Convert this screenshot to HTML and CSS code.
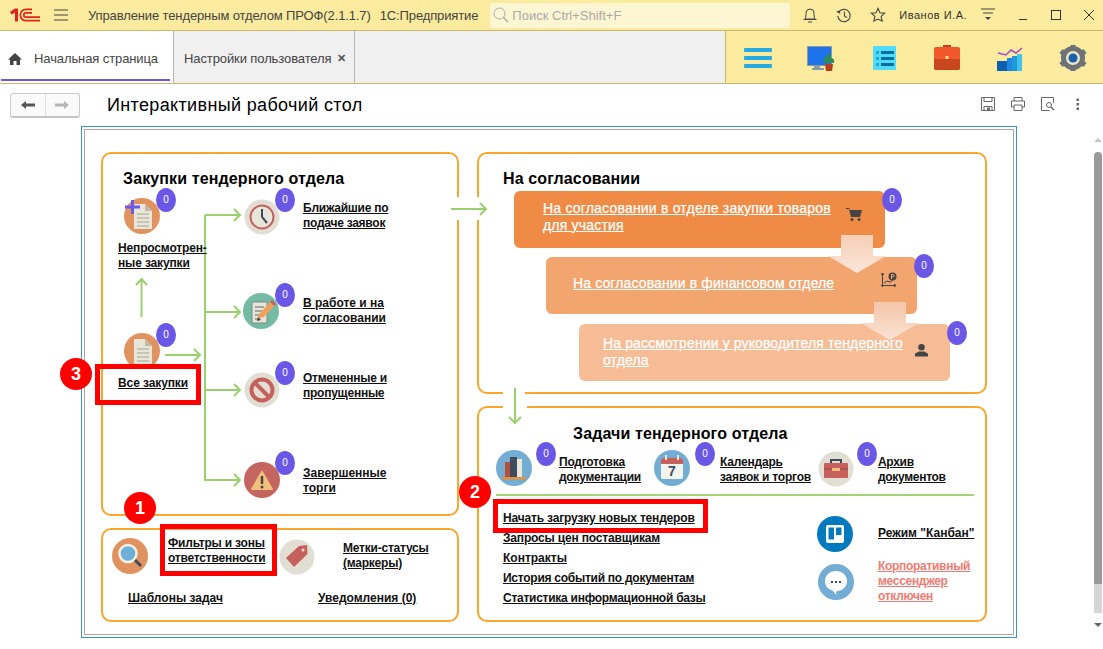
FILE: index.html
```html
<!DOCTYPE html>
<html lang="ru">
<head>
<meta charset="utf-8">
<title>Интерактивный рабочий стол</title>
<link rel="stylesheet" href="styles.css">
</head>
<body>
<header class="titlebar">
  <svg class="logo" viewBox="0 0 30 14"><path d="M0 4l5-3.500h3V13.500H5V4.500L1.500 6.500z" fill="#e2231a"/><path d="M22 1.300h-6a5.700 5.700 0 0 0 0 11.400h14M22 4.800h-6a2.200 2.200 0 0 0 0 4.400h14" fill="none" stroke="#e2231a" stroke-width="1.700"/></svg>
  <svg class="ico burger" viewBox="0 0 14 12"><path d="M0 1h14M0 6h14M0 11h14" stroke="#444" fill="none"/></svg>
  <span class="apptitle">Управление тендерным отделом ПРОФ(2.1.1.7)</span>
  <span class="apptitle second">1С:Предприятие</span>
  <div class="search">
    <svg class="search-ico" viewBox="0 0 16 16"><circle cx="6.500" cy="6.500" r="5.500" fill="none" stroke="#aaa"/><path d="M10.500 10.500l4.500 4.500" stroke="#aaa" stroke-width="1.500"/></svg>
    <span>Поиск Ctrl+Shift+F</span>
  </div>
  <div class="title-tools">
    <svg class="tool" viewBox="0 0 16 18"><path d="M3 13c1-2 1-4 1-6a4 4 0 0 1 8 0c0 2 0 4 1 6zM1.500 13.500h13" fill="none" stroke="#444"/><path d="M6 15.500h4v1H6z" fill="#444"/></svg>
    <svg class="tool" viewBox="0 0 18 18"><path d="M3 6a7 7 0 1 1-1 4" fill="none" stroke="#444" stroke-width="1.200"/><path d="M0 5l4-1 1 4z" fill="#444"/><path d="M9.500 5v5l3 2" fill="none" stroke="#444" stroke-width="1.200"/></svg>
    <svg class="tool" viewBox="0 0 18 18"><path d="M9 1.500l2.200 5 5.300.5-4 3.500 1.200 5.300L9 13.500l-4.700 2.300 1.200-5.300-4-3.500 5.300-.5z" fill="none" stroke="#444" stroke-width="1.200"/></svg>
    <span class="user">Иванов И.А.</span>
    <svg class="tool menu-ico" viewBox="0 0 14 14"><path d="M0 1h14M2 5h10" stroke="#444" fill="none"/><path d="M4 9h6l-3 3z" fill="#444"/></svg>
    <svg class="win" viewBox="0 0 12 12"><path d="M2 10.500h8" stroke="#333"/></svg>
    <svg class="win" viewBox="0 0 12 12"><rect x="1.500" y="1.500" width="9" height="9" fill="none" stroke="#333"/></svg>
    <svg class="win" viewBox="0 0 12 12"><path d="M1 1l10 10M11 1L1 11" stroke="#333"/></svg>
  </div>
</header>

<nav class="tabbar">
  <div class="tab tab-home">
    <svg class="home" viewBox="0 0 14 12"><path d="M7 0l7 6.500h-2V12H8.500V8h-3v4H2V6.500H0z" fill="#444"/></svg>
    <span>Начальная страница</span>
  </div>
  <div class="tab tab-settings">
    <span>Настройки пользователя</span>
    <span class="close">✕</span>
  </div>
  <div class="tab-fill"></div>
  <div class="sections">
    <svg class="sec" viewBox="0 0 28 26"><g fill="#27a9e1"><rect x="0" y="3" width="28" height="4" rx="1"/><rect x="0" y="11" width="28" height="4" rx="1"/><rect x="0" y="19" width="28" height="4" rx="1"/></g></svg>
    <svg class="sec" viewBox="0 0 28 26"><rect x="0" y="1" width="25" height="20" fill="#8a9aa5"/><rect x="1" y="2" width="23" height="18" fill="#1e73e8"/><rect x="7" y="21" width="6" height="2" fill="#8a9aa5"/><rect x="5" y="23" width="12" height="2" fill="#8a9aa5"/><path d="M18 19h8l-1 7h-6z" fill="#b5401c"/><path d="M17 18c-1-3 0-5 2-5 0-2 1-4 3-4s2 2 2 4c2 0 4 2 3 5z" fill="#2e8b57"/></svg>
    <svg class="sec" viewBox="0 0 28 26"><rect x="3" y="1" width="23" height="24" rx="1" fill="#4fdcff"/><g fill="#0b6f9c"><rect x="11" y="6" width="13" height="3"/><rect x="11" y="12" width="13" height="3"/><rect x="11" y="18" width="13" height="3"/><rect x="6" y="6" width="3" height="3" fill="#23a6d5"/><rect x="6" y="12" width="3" height="3" fill="#23a6d5"/><rect x="6" y="18" width="3" height="3" fill="#23a6d5"/></g></svg>
    <svg class="sec" viewBox="0 0 28 26"><rect x="10" y="0" width="8" height="3" fill="#c8401d"/><rect x="1" y="2" width="26" height="23" rx="2" fill="#f0582b"/><path d="M1 14h26v9a2 2 0 0 1-2 2H3a2 2 0 0 1-2-2z" fill="#c8471f"/><rect x="12.500" y="11" width="3" height="3" fill="#fcd98a"/></svg>
    <svg class="sec" viewBox="0 0 28 26"><path d="M2 8l8 2 5-5 5 3 6-5" fill="none" stroke="#a64ac9" stroke-width="1.500"/><rect x="1" y="16" width="10" height="10" fill="#0f5fb0"/><rect x="11" y="13" width="5" height="13" fill="#1e88e5"/><rect x="16" y="11" width="5" height="15" fill="#2196d9"/><rect x="21" y="9" width="5" height="17" fill="#3fc4ee"/></svg>
    <svg class="sec" viewBox="0 0 28 26"><circle cx="14" cy="13" r="9.500" fill="none" stroke="#6e7278" stroke-width="5"/><path d="M14 0v4M14 22v4M2 6l3 2.500M26 6l-3 2.500M2 20l3-2.500M26 20l-3-2.500" stroke="#6e7278" stroke-width="5"/><circle cx="14" cy="13" r="6" fill="#dde2e6"/><circle cx="14" cy="13" r="4.500" fill="#1c5fa8"/></svg>
  </div>
</nav>

<section class="page-head">
  <div class="nav-btns">
    <span class="nav-btn"><svg viewBox="0 0 14 10"><path d="M0 5l5-4v2.500h9v3H5V9z" fill="#555"/></svg></span>
    <span class="nav-btn"><svg viewBox="0 0 14 10"><path d="M14 5L9 1v2.500H0v3h9V9z" fill="#b5b5b5"/></svg></span>
  </div>
  <h1>Интерактивный рабочий стол</h1>
  <div class="page-tools">
    <svg viewBox="0 0 16 16"><path d="M1.500 1.500h13v13h-13zM4 1.500v4h8v-4M4 14.500v-4h8v4" fill="none" stroke="#666"/><rect x="7" y="11.500" width="3" height="3" fill="#666"/></svg>
    <svg viewBox="0 0 16 16"><path d="M4 5V1.500h8V5M4 11H1.500V5h13v6H12M4 9h8v5.500H4z" fill="none" stroke="#666"/></svg>
    <svg viewBox="0 0 16 16"><path d="M13.500 7V1.500h-12v13h8" fill="none" stroke="#666"/><circle cx="9" cy="9" r="2.500" fill="none" stroke="#666"/><path d="M11 11l3 3" stroke="#666" stroke-width="1.500"/></svg>
    <svg viewBox="0 0 16 16"><g fill="#666"><rect x="6.500" y="2.500" width="2.500" height="2.500"/><rect x="6.500" y="7" width="2.500" height="2.500"/><rect x="6.500" y="11.500" width="2.500" height="2.500"/></g></svg>
  </div>
</section>

<main class="frame">
  <div class="canvas">
    <div class="panel p1"></div>
    <div class="panel p2"></div>
    <div class="panel p3"></div>
    <div class="panel p4"></div>

    <svg class="wires" viewBox="0 0 1103 649">
      <g fill="none" stroke="#9bd06e" stroke-width="2">
        <path d="M141.500 317V279M136 285l5.500-6 5.500 6"/>
        <path d="M165 355h35M194 349l6 6-6 6"/>
        <path d="M205 215V480H240M205 215H240M234 209l6 6-6 6M205 312H240M234 306l6 6-6 6M205 390H240M234 384l6 6-6 6M234 474l6 6-6 6"/>
      </g>
      <path d="M496 495h478" stroke="#a5d478" stroke-width="2"/>
      <g fill="#fff">
        <rect x="457" y="197" width="4" height="23"/>
        <rect x="475" y="197" width="4" height="23"/>
        <rect x="503" y="390" width="22" height="4"/>
        <rect x="503" y="404" width="24" height="4"/>
      </g>
      <path d="M451 209h35M480 203l6 6-6 6M515 388v35M509 417l6 6 6-6" fill="none" stroke="#9bd06e" stroke-width="2"/>
    </svg>

    <h2 class="ptitle t1">Закупки тендерного отдела</h2>
    <h2 class="ptitle t2">На согласовании</h2>
    <h2 class="ptitle t3">Задачи тендерного отдела</h2>

    <svg class="icon i-new" viewBox="0 0 36 36"><circle cx="18" cy="18" r="18" fill="#e0935e"/><path d="M10 6h11l7 7v18H10z" fill="#e8e6d8"/><path d="M21 6l7 7h-7z" fill="#bdbaa8"/><path d="M13 16h12M13 20h12M13 24h12M13 28h12" stroke="#bdbaa8" stroke-width="1.500"/><path d="M1 9h15M8.500 2v14" stroke="#6a5ae8" stroke-width="3"/></svg>
    <svg class="icon i-all" viewBox="0 0 36 36"><circle cx="18" cy="18" r="18" fill="#e0935e"/><path d="M10 6h11l7 7v18H10z" fill="#e8e6d8"/><path d="M21 6l7 7h-7z" fill="#bdbaa8"/><path d="M13 16h12M13 20h12M13 24h12M13 28h12" stroke="#bdbaa8" stroke-width="1.500"/></svg>
    <svg class="icon i-clock" viewBox="0 0 36 36"><circle cx="18" cy="18" r="17.500" fill="#e1dfd3"/><circle cx="18" cy="18" r="11.500" fill="#e8e6da" stroke="#c5605d" stroke-width="2"/><path d="M18 10v8l5 6" fill="none" stroke="#3f4c5c" stroke-width="2"/></svg>
    <svg class="icon i-work" viewBox="0 0 36 36"><circle cx="18" cy="18" r="18" fill="#74bba5"/><path d="M9 9h15v21H9z" fill="#e8e6d8" stroke="#7f8a8a"/><path d="M12 14h9M12 18h7M12 22h5M12 26h5" stroke="#8a8f8f" stroke-width="1.500"/><path d="M14 26l3-6 11-12 4 4-11 12z" fill="#efa35a"/><path d="M27 9l2-2 4 4-2 2z" fill="#c5605d"/><path d="M14 28l1-4 3 3z" fill="#444"/></svg>
    <svg class="icon i-cancel" viewBox="0 0 36 36"><circle cx="18" cy="18" r="17.500" fill="#e1dfd3"/><circle cx="18" cy="18" r="10.500" fill="none" stroke="#c5605d" stroke-width="4"/><path d="M10.500 10.500l15 15" stroke="#c5605d" stroke-width="4"/></svg>
    <svg class="icon i-done" viewBox="0 0 36 36"><circle cx="18" cy="18" r="18" fill="#c5655f"/><path d="M18 8l11 19a1 1 0 0 1-1 1H8a1 1 0 0 1-1-1z" fill="#f2c07d"/><path d="M18 14v8" stroke="#444" stroke-width="2.500"/><circle cx="18" cy="25" r="1.500" fill="#444"/></svg>
    <svg class="icon i-search" viewBox="0 0 36 36"><circle cx="18" cy="18" r="18" fill="#e0935e"/><circle cx="16" cy="15.500" r="8.500" fill="#6eb0d8" stroke="#f3f1e5" stroke-width="2.500"/><path d="M23 22l6 6" stroke="#3f4c5c" stroke-width="3"/></svg>
    <svg class="icon i-tag" viewBox="0 0 36 36"><circle cx="18" cy="18" r="17.500" fill="#e1dfd3"/><path d="M7 19L20 7l8-1 .5 9L15 28z" fill="#c5605d"/><circle cx="24" cy="11" r="1.500" fill="#e1dfd3"/></svg>
    <svg class="icon i-books" viewBox="0 0 36 36"><circle cx="18" cy="18" r="18" fill="#74add4"/><rect x="9" y="12" width="5" height="15" fill="#b5503c"/><rect x="14" y="7" width="7" height="20" fill="#3f4c5c"/><rect x="21" y="9" width="5" height="18" fill="#e8e6d8"/><rect x="6" y="27" width="24" height="2.500" fill="#e8903c"/></svg>
    <svg class="icon i-cal" viewBox="0 0 36 36"><circle cx="18" cy="18" r="18" fill="#74add4"/><rect x="7" y="8" width="22" height="21" rx="2" fill="#f4f4ee"/><path d="M7 14v-4a2 2 0 0 1 2-2h18a2 2 0 0 1 2 2v4z" fill="#c5605d"/><path d="M12 5v5M24 5v5" stroke="#e8e6d8" stroke-width="2"/><text class="cal-num" x="18" y="26" text-anchor="middle">7</text></svg>
    <svg class="icon i-case" viewBox="0 0 36 36"><circle cx="18" cy="18" r="17.500" fill="#e1dfd3"/><path d="M13 12V9h10v3" fill="none" stroke="#3f4c5c" stroke-width="2"/><rect x="6" y="12" width="24" height="15" rx="1" fill="#c5605d"/><path d="M6 18h24" stroke="#a64d4b" stroke-width="1.500"/><rect x="14" y="17" width="8" height="3" fill="#f2c07d"/></svg>
    <svg class="icon i-kanban" viewBox="0 0 36 36"><circle cx="18" cy="18" r="18" fill="#0079bf"/><rect x="9" y="9" width="18" height="18" rx="2" fill="#fff"/><rect x="11.500" y="11.500" width="5.500" height="12" fill="#0079bf"/><rect x="19" y="11.500" width="5.500" height="7.500" fill="#0079bf"/></svg>
    <svg class="icon i-chat" viewBox="0 0 36 36"><circle cx="18" cy="18" r="18" fill="#74add4"/><path d="M18 7c6.500 0 11 4.500 11 10s-4.500 10-10 10l-1 1 .5 3-4-4.500C9.500 25 7 21.500 7 17 7 11.500 11.500 7 18 7z" fill="#fff"/><path d="M13 18h2M17 18h2M21 18h2" stroke="#3f4c5c" stroke-width="2"/></svg>

    <a class="lnk l-new">Непросмотрен-<br>ные закупки</a>
    <a class="lnk l-all">Все закупки</a>
    <a class="lnk l-near">Ближайшие по<br>подаче заявок</a>
    <a class="lnk l-work">В работе и на<br>согласовании</a>
    <a class="lnk l-cancel">Отмененные и<br>пропущенные</a>
    <a class="lnk l-done">Завершенные<br>торги</a>
    <a class="lnk l-filter">Фильтры и зоны<br>ответственности</a>
    <a class="lnk l-marks">Метки-статусы<br>(маркеры)</a>
    <a class="lnk l-tmpl">Шаблоны задач</a>
    <a class="lnk l-notif">Уведомления (0)</a>

    <a class="lnk l-prep">Подготовка<br>документации</a>
    <a class="lnk l-cal">Календарь<br>заявок и торгов</a>
    <a class="lnk l-arch">Архив<br>документов</a>
    <a class="lnk l-kanban">Режим "Канбан"</a>
    <a class="lnk l-msg">Корпоративный<br>мессенджер<br>отключен</a>
    <div class="tasklist">
      <a class="lnk-item tight-1">Начать загрузку новых тендеров</a>
      <a class="lnk-item tight-1">Запросы цен поставщикам</a>
      <a class="lnk-item">Контракты</a>
      <a class="lnk-item tight-2">История событий по документам</a>
      <a class="lnk-item tight-2">Статистика информационной базы</a>
    </div>

    <div class="stage s1"><a>На согласовании в отделе закупки товаров<br>для участия</a>
      <svg viewBox="0 0 16 14"><path d="M0 1h3l1 2h12l-2 7H5L3 2H0z" fill="#444"/><circle cx="6" cy="12.500" r="1.500" fill="#444"/><circle cx="13" cy="12.500" r="1.500" fill="#444"/></svg></div>
    <div class="stage s2"><a>На согласовании в финансовом отделе</a>
      <svg viewBox="0 0 16 16"><path d="M1.500 1v14M0 13.500h15M1.500 1L0 3M1.500 1L3 3M15 13.500L13 12M15 13.500L13 15M3 11l3-2 3 1 3-2" fill="none" stroke="#444"/><circle cx="11.500" cy="4.500" r="4" fill="#444"/><path d="M10.500 7V2.500h1.500a1 1 0 0 1 0 2.500H10" fill="none" stroke="#f2a56e"/></svg></div>
    <div class="stage s3"><a>На рассмотрении у руководителя тендерного<br>отдела</a>
      <svg viewBox="0 0 14 14"><circle cx="7" cy="4" r="3.500" fill="#444"/><path d="M0 14v-3l4-2.500h6l4 2.500v3z" fill="#444"/></svg></div>
    <svg class="flow f1" viewBox="0 0 58 38"><defs><linearGradient id="fa" x1="0" y1="0" x2="0" y2="1"><stop offset="0" stop-color="#f6cfb6"/><stop offset="1" stop-color="#fbe6d9"/></linearGradient></defs><path d="M13 0h32v21h13L29 38 0 21h13z" fill="url(#fa)"/></svg>
    <svg class="flow f2" viewBox="0 0 58 38"><defs><linearGradient id="fb" x1="0" y1="0" x2="0" y2="1"><stop offset="0" stop-color="#f5c6a8"/><stop offset="1" stop-color="#fae3d5"/></linearGradient></defs><path d="M13 0h32v21h13L29 38 0 21h13z" fill="url(#fb)"/></svg>

    <span class="cnt c1">0</span><span class="cnt c2">0</span><span class="cnt c3">0</span><span class="cnt c4">0</span><span class="cnt c5">0</span><span class="cnt c6">0</span>
    <span class="cnt c7">0</span><span class="cnt c8">0</span><span class="cnt c9">0</span>
    <span class="cnt c10">0</span><span class="cnt c11">0</span><span class="cnt c12">0</span>

    <div class="hl h1"></div><div class="hl h2"></div><div class="hl h3"></div>
    <span class="mark m1">1</span><span class="mark m2">2</span><span class="mark m3">3</span>
  </div>
  <div class="scroll">
    <div class="arrow-up"></div>
    <div class="thumb"></div>
    <div class="arrow"></div>
  </div>
</main>
</body>
</html>
```
FILE: styles.css
```css
*, *::before, *::after { box-sizing: border-box; }
html, body { margin: 0; height: 649px; overflow: hidden; background: #fff; }
body { font-family: "Liberation Sans", Arial, sans-serif; color: #222; position: relative; }

.titlebar { height: 31px; background: #fbeb9f; border-bottom: 1px solid #c9b76c; display: flex; align-items: center; }
.logo { width: 30px; height: 14px; margin-left: 10px; flex: none; }
.burger { width: 14px; height: 12px; margin-left: 14px; flex: none; }
.apptitle { font-size: 13px; color: #444; margin-left: 20px; white-space: nowrap; letter-spacing: -.12px; }
.apptitle.second { margin-left: 9px; }
.search { width: 300px; height: 25px; margin-left: 12px; background: #fdf6d2; border-radius: 2px; display: flex; align-items: center; gap: 3px; padding-left: 3px; font-size: 13px; color: #aaa; flex: none; white-space: nowrap; }
.search-ico { width: 16px; height: 16px; }
.title-tools { display: flex; align-items: center; margin-left: 12px; }
.tool { width: 16px; height: 18px; margin-right: 18px; flex: none; }
.user { font-size: 11px; color: #333; margin-right: 14px; margin-left: -5px; white-space: nowrap; letter-spacing: .5px; }
.menu-ico { width: 14px; height: 14px; margin-right: 22px; }
.win { width: 12px; height: 12px; margin-right: 21px; flex: none; }

.tabbar { height: 53px; display: flex; border-bottom: 1px solid #c9b76c; }
.tab { display: flex; align-items: center; font-size: 13px; color: #444; white-space: nowrap; height: 52px; letter-spacing: -.1px; }
.tab-home { width: 174px; border-right: 1px solid #b5b5b5; padding: 3px 0 0 8px; gap: 12px; position: relative; }
.tab-home::after { content: ""; position: absolute; left: 1px; right: 3px; bottom: 2px; height: 2px; background: #6b57e6; }
.home { width: 14px; height: 12px; }
.tab-settings { width: 181px; background: #f0f0f0; border-right: 1px solid #b5b5b5; padding: 3px 0 0 10px; gap: 6px; }
.close { font-size: 11px; font-weight: bold; color: #555; }
.tab-fill { width: 371px; background: #f0f0f0; border-right: 1px solid #c9b76c; }
.sections { flex: 1; background: #fbeb9f; display: flex; align-items: center; justify-content: space-between; padding: 2px 16px 0 18px; }
.sec { width: 28px; height: 26px; }

.page-head { height: 42px; display: flex; align-items: center; padding: 0 17px 0 10px; }
.nav-btns { display: flex; width: 70px; height: 25px; border: 1px solid #ccc; border-bottom: 2px solid #c4c4c4; border-radius: 3px; background: #fafafa; }
.nav-btn { flex: 1; display: flex; align-items: center; justify-content: center; }
.nav-btn + .nav-btn { border-left: 1px solid #ddd; }
.nav-btn svg { width: 14px; height: 10px; }
h1 { margin: 0 0 0 27px; font-size: 18px; font-weight: normal; color: #000; flex: 1; letter-spacing: .35px; }
.page-tools { display: flex; gap: 14px; margin-top: -3px; }
.page-tools svg { width: 16px; height: 16px; }

.frame { display: flex; height: 522px; position: relative; }
.canvas { position: absolute; inset: -126px 0 0 0; height: 649px; }
.canvas::before { content: ""; position: absolute; left: 81px; top: 126px; width: 936px; height: 512px; border: 1px solid #3d8ee0; }
.canvas::after { content: ""; position: absolute; left: 84px; top: 129px; width: 930px; height: 506px; border: 1px solid #a6a6a6; }

.panel { position: absolute; border: 2px solid #f9a62b; border-radius: 10px; background: #fff; z-index: 1; }
.p1 { left: 101px; top: 152px; width: 358px; height: 364px; }
.p2 { left: 101px; top: 528px; width: 358px; height: 94px; }
.p3 { left: 477px; top: 152px; width: 510px; height: 242px; }
.p4 { left: 477px; top: 406px; width: 510px; height: 216px; }

.wires { position: absolute; left: 0; top: 0; width: 1103px; height: 649px; z-index: 2; }

.ptitle { position: absolute; margin: 0; font-size: 16px; font-weight: bold; color: #000; white-space: nowrap; z-index: 3; letter-spacing: .12px; }
.t1 { left: 123px; top: 170px; }
.t2 { left: 503px; top: 170px; }
.t3 { left: 573px; top: 425px; }

.icon { position: absolute; width: 36px; height: 36px; z-index: 3; }
.i-new { left: 124px; top: 198px; }
.i-all { left: 124px; top: 333px; }
.i-clock { left: 244px; top: 199px; }
.i-work { left: 243px; top: 293px; }
.i-cancel { left: 244px; top: 372px; }
.i-done { left: 244px; top: 462px; }
.i-search { left: 112px; top: 538px; }
.i-tag { left: 279px; top: 539px; }
.i-books { left: 496px; top: 450px; }
.i-cal { left: 654px; top: 450px; }
.i-case { left: 818px; top: 451px; }
.i-kanban { left: 817px; top: 516px; }
.i-chat { left: 818px; top: 564px; }
.cal-num { font-family: "Liberation Sans", sans-serif; font-size: 14px; font-weight: bold; fill: #3f4c5c; }

.lnk, .lnk-item { color: #111; font-size: 12px; font-weight: bold; line-height: 15px; text-decoration: underline; white-space: nowrap; }
.lnk { position: absolute; z-index: 3; }
.tight-1 { letter-spacing: -.17px; }
.tight-2 { letter-spacing: -.26px; }
.l-new { left: 118px; top: 241px; letter-spacing: -.15px; }
.l-all { left: 118px; top: 376px; letter-spacing: -.1px; }
.l-near { left: 303px; top: 201px; letter-spacing: -.25px; }
.l-work { left: 303px; top: 296px; }
.l-cancel { left: 303px; top: 371px; letter-spacing: -.25px; }
.l-done { left: 303px; top: 466px; }
.l-filter { left: 168px; top: 536px; letter-spacing: -.2px; }
.l-marks { left: 343px; top: 541px; letter-spacing: -.22px; }
.l-tmpl { left: 128px; top: 591px; }
.l-notif { left: 318px; top: 591px; }
.l-prep { left: 559px; top: 455px; letter-spacing: -.25px; }
.l-cal { left: 720px; top: 455px; letter-spacing: -.2px; }
.l-arch { left: 878px; top: 455px; letter-spacing: -.3px; }
.l-kanban { left: 878px; top: 526px; }
.l-msg { left: 878px; top: 559px; color: #f47a72; letter-spacing: -.3px; }
.tasklist { position: absolute; left: 503px; top: 511px; display: flex; flex-direction: column; gap: 5px; z-index: 3; }

.stage { position: absolute; z-index: 3; width: 371px; height: 57px; border-radius: 6px; color: #fff; font-size: 14px; line-height: 17px; -webkit-text-stroke: .25px #fff; }
.stage a { position: absolute; text-decoration: underline; white-space: nowrap; }
.stage svg { position: absolute; width: 16px; height: 16px; }
.s1 { left: 514px; top: 191px; background: #f08b45; }
.s1 a { left: 29px; top: 9px; letter-spacing: .2px; }
.s1 svg { left: 332px; top: 15px; }
.s2 { left: 546px; top: 257px; background: #f2a56e; }
.s2 a { left: 27px; top: 18px; letter-spacing: .12px; }
.s2 svg { left: 335px; top: 15px; }
.s3 { left: 579px; top: 324px; background: #f6bc95; }
.s3 a { left: 24px; top: 11px; letter-spacing: .12px; }
.s3 svg { left: 336px; top: 19px; width: 13px; height: 14px; }
.flow { position: absolute; width: 58px; height: 38px; z-index: 4; }
.f1 { left: 828px; top: 235px; }
.f2 { left: 861px; top: 302px; }

.cnt { position: absolute; z-index: 5; width: 20px; height: 24px; border-radius: 50%; background: #6b57e6; color: #fff; font-size: 10px; line-height: 24px; text-align: center; }
.c1 { left: 156px; top: 188px; }
.c2 { left: 156px; top: 323px; }
.c3 { left: 275px; top: 188px; }
.c4 { left: 275px; top: 283px; }
.c5 { left: 275px; top: 361px; }
.c6 { left: 275px; top: 451px; }
.c7 { left: 882px; top: 188px; }
.c8 { left: 914px; top: 254px; }
.c9 { left: 947px; top: 321px; }
.c10 { left: 536px; top: 442px; }
.c11 { left: 695px; top: 442px; }
.c12 { left: 857px; top: 442px; }

.hl { position: absolute; z-index: 6; border: 5px solid #fe0000; }
.h1 { left: 160px; top: 524px; width: 117px; height: 52px; }
.h2 { left: 493px; top: 499px; width: 215px; height: 34px; }
.h3 { left: 95px; top: 364px; width: 106px; height: 41px; }
.mark { position: absolute; z-index: 7; width: 32px; height: 32px; border-radius: 50%; background: #fe0000; color: #fff; font-size: 18px; font-weight: bold; line-height: 32px; text-align: center; }
.m1 { left: 124px; top: 492px; }
.m2 { left: 459px; top: 476px; }
.m3 { left: 60px; top: 358px; }

.scroll { position: absolute; left: 1094px; top: 26px; width: 8px; }
.thumb { height: 432px; width: 8px; border-radius: 4px 4px 0 0; background: #9a9a9a; box-shadow: 0 29px 0 0 #d6d6d6; }
.arrow-up { position: absolute; left: 0; top: -14px; width: 0; height: 0; border: 4px solid transparent; border-bottom: 4px solid #c4c4c4; border-top: 0; }
.arrow { margin: 39px 0 0 0; width: 0; height: 0; border: 4px solid transparent; border-top: 4px solid #666; border-bottom: 0; }
```
